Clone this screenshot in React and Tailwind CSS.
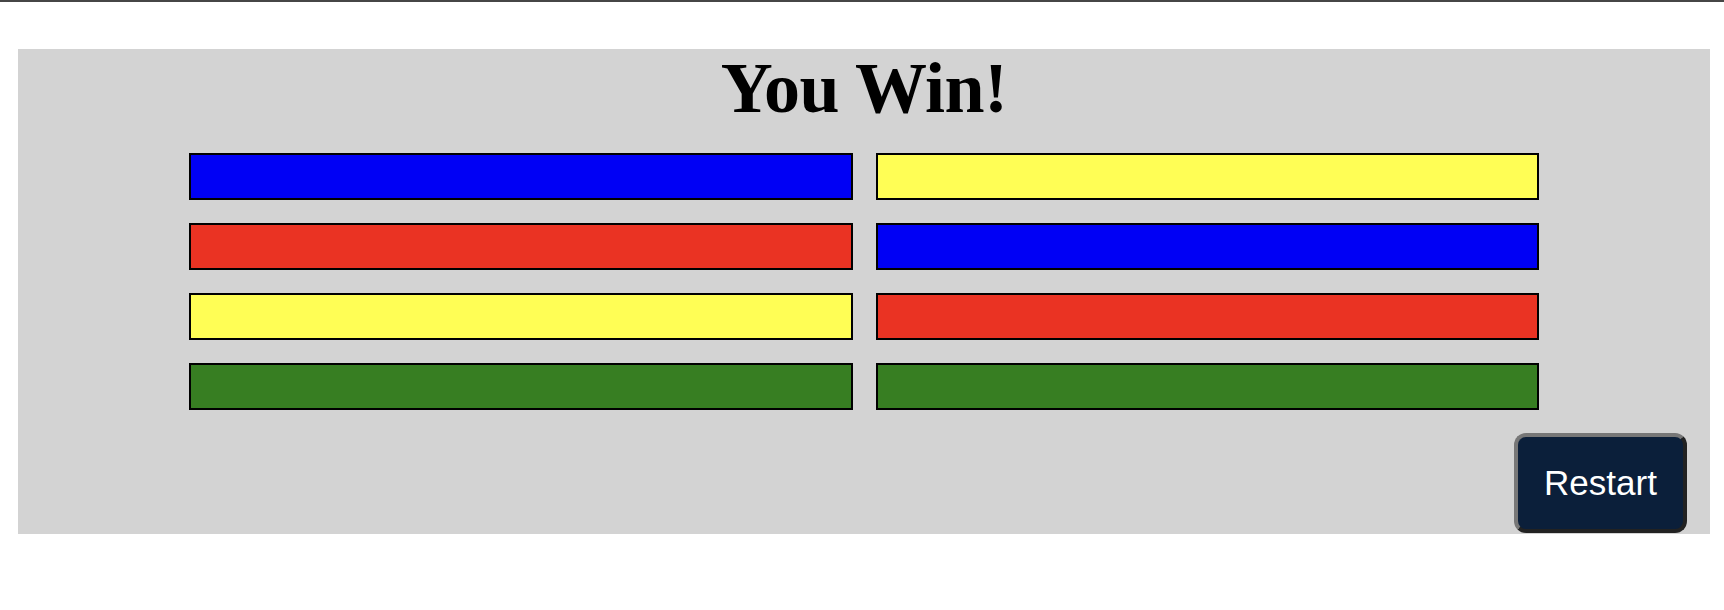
const rows = [
    ["bg-[#0000f5]", "bg-[#fffe55]"],
    ["bg-[#ea3323]", "bg-[#0000f5]"],
    ["bg-[#fffe55]", "bg-[#ea3323]"],
    ["bg-[#377e22]", "bg-[#377e22]"],
];

export default function App() {
    return (
        <div className="w-[1724px] h-[610px] bg-white">
            <div className="h-[2px] bg-[#464646]" />
            <div className="mt-[47px] ml-[18px] w-[1692px] bg-[#d3d3d3] pt-[3px] pb-[1px] flex flex-col">
                <h1
                    className="text-center text-[72px] leading-[72px] font-bold tracking-[-0.6px] text-black mb-[29px]"
                    style={{ fontFamily: '"Liberation Serif", "Times New Roman", serif' }}
                >
                    You Win!
                </h1>
                <div className="w-[1350px] mx-auto grid grid-cols-2 gap-[23px]">
                    {rows.flatMap((row, i) =>
                        row.map((c, j) => (
                            <div key={`${i}-${j}`} className={`h-[47px] border-2 border-black ${c}`} />
                        ))
                    )}
                </div>
                <div className="flex justify-end mt-[23px] pr-[23px]">
                    <button
                        className="w-[173px] h-[100px] rounded-[12px] bg-[#0b1f3a] text-white text-[35px] border-[4px] border-t-[#777777] border-l-[#777777] border-r-[#222222] border-b-[#222222]"
                        style={{ fontFamily: '"Liberation Sans", Arial, sans-serif' }}
                    >
                        Restart
                    </button>
                </div>
            </div>
        </div>
    );
}
